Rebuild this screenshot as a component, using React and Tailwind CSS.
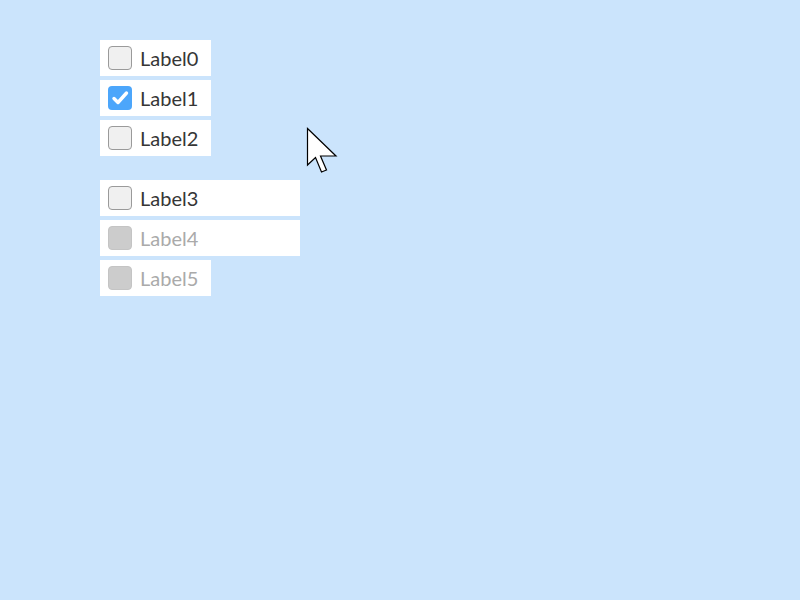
export default function App() {
  const groupA = [
    { label: "Label0" },
    { label: "Label1", checked: true },
    { label: "Label2" },
  ];
  const groupB = [
    { label: "Label3", wide: true },
    { label: "Label4", wide: true, disabled: true },
    { label: "Label5", disabled: true },
  ];

  return (
    <div className="relative w-[800px] h-[600px] bg-[#cbe4fc] pt-10 pl-[100px] font-['Lato',sans-serif]">
      <div className="flex flex-col gap-1">
        {groupA.map((item) => (
          <CheckRow key={item.label} {...item} />
        ))}
      </div>
      <div className="flex flex-col gap-1 mt-6">
        {groupB.map((item) => (
          <CheckRow key={item.label} {...item} />
        ))}
      </div>

      {/* mouse pointer */}
      <svg className="absolute left-[306px] top-[127px]" width="32" height="48" viewBox="0 0 32 48">
        <path
          d="M1.5 1.5 L1.5 38 L9.5 30.5 L15.5 45 L20.5 43 L14.5 29 L30 29 Z"
          fill="#fff"
          stroke="#000"
          strokeWidth="1.2"
          strokeLinejoin="miter"
        />
      </svg>
    </div>
  );
}

function CheckRow({ label, checked, disabled, wide }) {
  return (
    <div
      className={`flex items-center gap-2 h-9 pl-2 bg-white ${wide ? "w-[200px]" : "w-[111px]"}`}
    >
      {checked ? (
        <span className="flex items-center justify-center w-6 h-6 rounded-[4px] bg-[#4ca6fb]">
          <svg width="20" height="20" viewBox="0 0 20 20">
            <path d="M4 10.5 L8 14.5 L16.5 5" fill="none" stroke="#fff" strokeWidth="3.4" strokeLinecap="round" strokeLinejoin="round" />
          </svg>
        </span>
      ) : disabled ? (
        <span className="w-6 h-6 rounded-[4px] bg-[#cccccc] border border-[#c4c4c4]" />
      ) : (
        <span className="w-6 h-6 rounded-[4px] bg-[#f0f0f0] border border-[#9a9a9a]" />
      )}
      <span className={`text-[20px] leading-none ${disabled ? "text-[#aaaaaa]" : "text-[#363636]"}`}>{label}</span>
    </div>
  );
}
